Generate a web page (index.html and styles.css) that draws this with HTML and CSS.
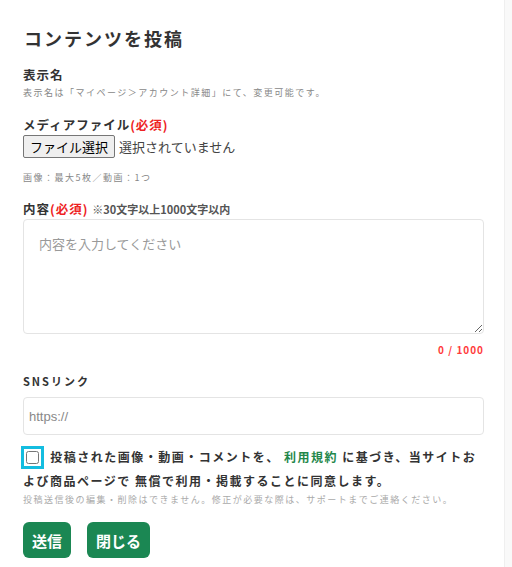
FILE: index.html
```html
<!DOCTYPE html>
<html lang="ja">
<head>
    <meta charset="UTF-8">
    <title>コンテンツを投稿</title>
    <link rel="stylesheet" href="styles.css">
</head>
<body>
<div class="page">
    <h2 class="title">コンテンツを投稿</h2>

    <div class="lbl">表示名</div>
    <p class="note">表示名は「マイページ＞アカウント詳細」にて、変更可能です。</p>

    <div class="lbl lbl-media">メディアファイル<span class="req">(必須)</span></div>
    <label class="file">
        <input class="file-ipt" type="file">
        <span class="file-btn">ファイル選択</span>
        <span class="file-name">選択されていません</span>
    </label>
    <p class="note note-media">画像：最大5枚／動画：1つ</p>

    <div class="lbl lbl-body">内容<span class="req">(必須)</span> <span class="hint">※30文字以上1000文字以内</span></div>
    <textarea class="txt" placeholder="内容を入力してください"></textarea>
    <div class="count">0 / 1000</div>

    <div class="lbl lbl-sns">SNSリンク</div>
    <input class="ipt" type="text" placeholder="https://">

    <div class="agree">
        <input class="chk" type="checkbox" id="agreeChk">
        <label for="agreeChk">投稿された画像・動画・コメントを、 <a class="terms" href="#">利用規約</a> に基づき、当サイトおよび商品ページで 無償で利用・掲載することに同意します。</label>
    </div>
    <p class="note note-last">投稿送信後の編集・削除はできません。修正が必要な際は、サポートまでご連絡ください。</p>

    <div class="btns">
        <button class="btn">送信</button>
        <button class="btn">閉じる</button>
    </div>
</div>
</body>
</html>
```

FILE: styles.css
```css
body{
    margin: 0;
    background-color: #f9f9f9;
    font-family: "Noto Sans CJK JP", "Noto Sans", sans-serif;
    color: #333;
}
.page{
    width: 461px;
    height: 567px;
    padding: 27px 20px 0 23px;
    box-sizing: content-box;
    background-color: #fff;
    border-right: 1px solid #efefef;
}
.title{
    margin: 0 0 17px 1px;
    font-size: 18px;
    line-height: 22px;
    letter-spacing: 2px;
    font-weight: bold;
    color: #333;
}
.lbl{
    font-size: 12.5px;
    line-height: 18px;
    font-weight: bold;
    letter-spacing: 1px;
}
.req{
    color: #ee2222;
}
.hint{
    font-size: 11px;
    color: #555;
    letter-spacing: 0;
}
.note{
    margin: 2px 0 0 0;
    font-size: 9px;
    line-height: 14px;
    letter-spacing: 1.5px;
    color: #888;
}
.lbl-media{
    margin-top: 16px;
}
.file{
    display: flex;
    align-items: center;
    gap: 4px;
    margin-top: 1px;
    height: 23px;
    font-size: 13px;
    color: #444;
}
.file-ipt{
    display: none;
}
.file-btn{
    box-sizing: border-box;
    height: 23px;
    padding: 0 6px;
    line-height: 21px;
    border: 1px solid #767676;
    border-radius: 2px;
    background-color: #efefef;
    color: #000;
}
.note-media{
    margin-top: 13px;
}
.lbl-body{
    margin-top: 15px;
}
.txt{
    display: block;
    box-sizing: border-box;
    width: 461px;
    height: 115px;
    margin-top: 1px;
    padding: 14px 15px;
    border: 1px solid #e4e4e4;
    border-radius: 4px;
    font-family: "Noto Sans CJK JP", sans-serif;
    font-size: 13px;
    line-height: 20px;
}
.txt::placeholder{
    color: #999;
}
.count{
    margin-top: 9px;
    text-align: right;
    font-size: 10px;
    line-height: 14px;
    font-weight: bold;
    letter-spacing: 1px;
    color: #ff3b3b;
}
.lbl-sns{
    margin-top: 15px;
    font-size: 11px;
    letter-spacing: 2px;
}
.ipt{
    display: block;
    box-sizing: border-box;
    width: 461px;
    height: 38px;
    margin-top: 7px;
    padding: 0 5px;
    border: 1px solid #e4e4e4;
    border-radius: 4px;
    font-family: "Liberation Sans", "Noto Sans CJK JP", sans-serif;
    font-size: 13px;
}
.ipt::placeholder{
    color: #888;
}
.agree{
    margin-top: 10px;
    font-size: 12px;
    line-height: 24px;
    font-weight: bold;
    letter-spacing: 1.5px;
}
.chk{
    width: 13px;
    height: 13px;
    margin: 0 7px 0 3px;
    vertical-align: -2px;
    outline: 3px solid #14bde0;
    outline-offset: 2px;
}
.terms{
    color: #23874a;
    text-decoration: none;
}
.note-last{
    margin-top: 0;
    color: #aaa;
}
.btns{
    display: flex;
    gap: 16px;
    margin-top: 15px;
}
.btn{
    height: 36px;
    padding: 0 9px;
    border: 0;
    border-radius: 6px;
    background-color: #1b8753;
    color: #fff;
    font-family: "Noto Sans CJK JP", sans-serif;
    font-size: 15px;
    font-weight: bold;
}
```
